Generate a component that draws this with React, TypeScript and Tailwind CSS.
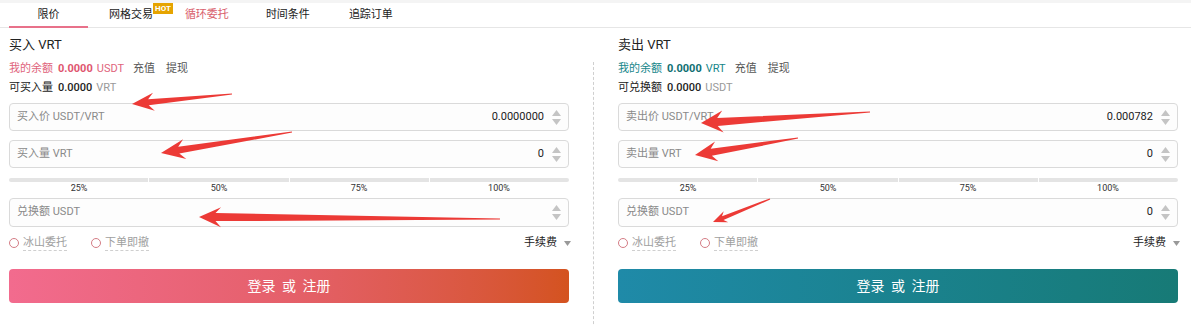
import React from 'react';

type Side = 'buy' | 'sell';

const arrows = [
  { tip: [132, 104], tail: [232, 94], hl: 22, hw: 9, sw: 3 },
  { tip: [161, 153], tail: [292, 132], hl: 24, hw: 10, sw: 3.5 },
  { tip: [199, 217], tail: [500, 219], hl: 22, hw: 10, sw: 4 },
  { tip: [701, 123], tail: [870, 112], hl: 22, hw: 11, sw: 4 },
  { tip: [695, 155], tail: [798, 138], hl: 22, hw: 10, sw: 3.5 },
  { tip: [713, 222], tail: [770, 199], hl: 14, hw: 6, sw: 2 },
];

function arrowPoints(a: (typeof arrows)[number]) {
  const [tx, ty] = a.tip;
  const [ex, ey] = a.tail;
  const len = Math.hypot(ex - tx, ey - ty);
  const dx = (ex - tx) / len;
  const dy = (ey - ty) / len;
  const nx = -dy;
  const ny = dx;
  const p = (d: number, n: number) => `${tx + dx * d + nx * n},${ty + dy * d + ny * n}`;
  return [
    p(0, 0),
    p(a.hl, a.hw),
    p(a.hl * 0.75, a.sw),
    p(len, 0.6),
    p(len, -0.6),
    p(a.hl * 0.75, -a.sw),
    p(a.hl, -a.hw),
  ].join(' ');
}

const Spinner = () => (
  <div className="flex flex-col items-center gap-[3px] ml-[8px]">
    <svg width="9" height="6" viewBox="0 0 9 6">
      <path d="M4.5 0 L9 6 L0 6 Z" fill="#c4c4c4" />
    </svg>
    <svg width="9" height="6" viewBox="0 0 9 6">
      <path d="M0 0 L9 0 L4.5 6 Z" fill="#c4c4c4" />
    </svg>
  </div>
);

const Field = ({ label, value, h = 'h-[28px]' }: { label: string; value?: string; h?: string }) => (
  <div className={`${h} flex items-center border border-[#dadada] rounded-[4px] bg-[#fdfdfd] pl-[7px] pr-[7px]`}>
    <span className="text-[11px] text-[#8a8a8a] flex-1">{label}</span>
    {value && <span className="text-[11px] text-[#222]">{value}</span>}
    <Spinner />
  </div>
);

const Panel = ({ side }: { side: Side }) => {
  const buy = side === 'buy';
  const accent = buy ? 'text-[#e0647c]' : 'text-[#16868a]';
  const accentBold = buy ? 'text-[#e0566f]' : 'text-[#0f6f72]';
  return (
    <div className="w-[560px] flex flex-col">
      <div className="mt-[8px] h-[18px] leading-[18px] text-[13px] text-[#222]">{buy ? '买入 VRT' : '卖出 VRT'}</div>
      <div className="mt-[7px] h-[16px] leading-[16px] text-[11px] flex items-center">
        <span className={accent}>我的余额</span>
        <span className={`${accentBold} font-bold ml-[5px]`}>0.0000</span>
        <span className={`${accent} ml-[4px]`}>{buy ? 'USDT' : 'VRT'}</span>
        <span className="text-[#555] ml-[9px]">充值</span>
        <span className="text-[#555] ml-[11px]">提现</span>
      </div>
      <div className="mt-[3px] h-[16px] leading-[16px] text-[11px] flex items-center">
        <span className="text-[#222]">{buy ? '可买入量' : '可兑换额'}</span>
        <span className="text-[#222] font-medium ml-[5px]">0.0000</span>
        <span className="text-[#999] ml-[4px]">{buy ? 'VRT' : 'USDT'}</span>
      </div>
      <div className="mt-[7px]">
        <Field label={buy ? '买入价 USDT/VRT' : '卖出价 USDT/VRT'} value={buy ? '0.0000000' : '0.000782'} />
      </div>
      <div className="mt-[9px]">
        <Field label={buy ? '买入量 VRT' : '卖出量 VRT'} value="0" />
      </div>
      <div className="mt-[10px] grid grid-cols-4 gap-[1px] h-[4px]">
        <div className="bg-[#e4e4e4] rounded-l-[2px]" />
        <div className="bg-[#e4e4e4]" />
        <div className="bg-[#e4e4e4]" />
        <div className="bg-[#e4e4e4] rounded-r-[2px]" />
      </div>
      <div className="grid grid-cols-4 h-[10px] leading-[10px] mt-[1px] text-[9px] text-[#333] text-center">
        <span>25%</span>
        <span>50%</span>
        <span>75%</span>
        <span>100%</span>
      </div>
      <div className="mt-[5px]">
        <Field label="兑换额 USDT" value={buy ? undefined : '0'} h="h-[29px]" />
      </div>
      <div className="mt-[8px] h-[16px] flex items-center text-[11px]">
        <span className="w-[10px] h-[10px] rounded-full border border-[#d47c85]" />
        <span className="ml-[4px] text-[#a0a0a0] border-b border-dashed border-[#cfcfcf] leading-[14px]">冰山委托</span>
        <span className="ml-[24px] w-[10px] h-[10px] rounded-full border border-[#d47c85]" />
        <span className="ml-[4px] text-[#a0a0a0] border-b border-dashed border-[#cfcfcf] leading-[14px]">下单即撤</span>
        <span className="ml-auto text-[#222]">手续费</span>
        <svg className="ml-[7px] mr-[-2px]" width="7" height="5" viewBox="0 0 7 5">
          <path d="M0 0 L7 0 L3.5 5 Z" fill="#999" />
        </svg>
      </div>
      <button
        className={`mt-[18px] h-[34px] rounded-[4px] text-white text-[14px] [word-spacing:3px] ${
          buy ? 'bg-linear-to-r from-[#f26b8e] via-[#e5606a] to-[#d4531f]' : 'bg-linear-to-r from-[#1f8aa8] to-[#177a76]'
        }`}
      >
        登录 或 注册
      </button>
    </div>
  );
};

export default function App() {
  return (
    <div className="relative w-[1191px] h-[326px] bg-white overflow-hidden font-[Roboto,'Noto_Sans_CJK_SC',sans-serif]">
      <div className="h-[3px] bg-[#f4f4f4]" />
      <div className="h-[25px] flex items-stretch border-b border-[#e6e6e6] text-[11px] text-[#222]">
        <div className="relative w-[79px] ml-[9px] flex items-center justify-center">
          限价
          <span className="absolute left-0 right-0 bottom-[-1px] h-[2px] bg-[#e8718a]" />
        </div>
        <div className="ml-[21px] flex items-center">网格交易</div>
        <div className="self-start h-[11px] px-[2px] bg-[#e6a400] text-white text-[8px] leading-[11px] font-bold">HOT</div>
        <div className="ml-[12px] flex items-center text-[#d9606c]">循环委托</div>
        <div className="ml-[37px] flex items-center">时间条件</div>
        <div className="ml-[39px] flex items-center">追踪订单</div>
      </div>
      <div className="flex pl-[9px]">
        <Panel side="buy" />
        <div className="w-[49px] flex justify-center pt-[34px]">
          <div className="h-[292px] border-l border-dashed border-[#cfcfcf]" />
        </div>
        <Panel side="sell" />
      </div>
      <svg className="absolute inset-0 pointer-events-none" width="1191" height="326">
        {arrows.map((a, i) => (
          <polygon key={i} points={arrowPoints(a)} fill="#ec3a36" />
        ))}
      </svg>
    </div>
  );
}
